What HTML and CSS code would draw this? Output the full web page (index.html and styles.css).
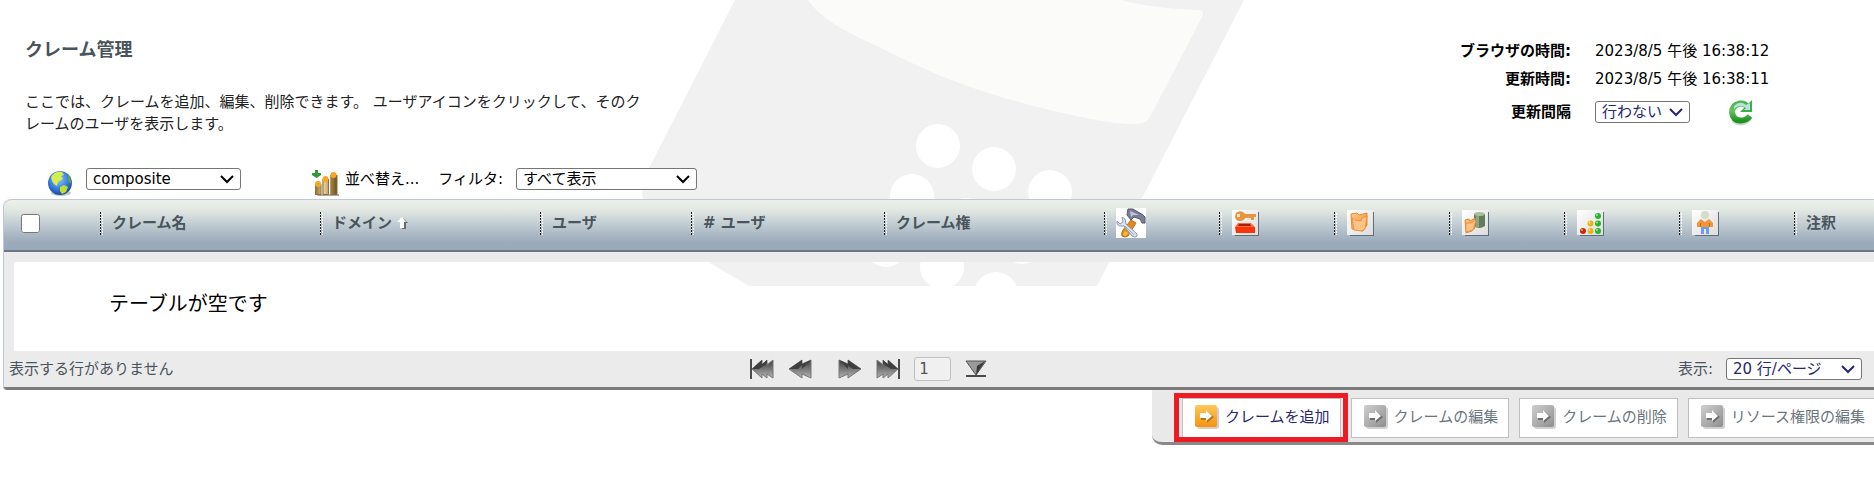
FILE: index.html
```html
<!DOCTYPE html>
<html lang="ja">
<head>
  <meta charset="UTF-8">
  <meta name="viewport" content="width=device-width, initial-scale=1.0">
  <title>クレーム管理</title>
  <link rel="stylesheet" href="styles.css">
</head>
<body>
  <!-- 共通のグラデーション -->
  <svg class="defs" width="0" height="0" aria-hidden="true">
    <defs>
      <linearGradient id="tile" x1="0" y1="0" x2="1" y2="1"><stop offset="0" stop-color="#ffffff"/><stop offset="1" stop-color="#dcdcdc"/></linearGradient>
      <linearGradient id="orange" x1="0" y1="0" x2="1" y2="1"><stop offset="0" stop-color="#ffc98c"/><stop offset="1" stop-color="#f08a2c"/></linearGradient>
      <linearGradient id="gold" x1="0" y1="0" x2="1" y2="0"><stop offset="0" stop-color="#8f6b2c"/><stop offset="0.4" stop-color="#ecd29a"/><stop offset="1" stop-color="#6d4a14"/></linearGradient>
      <linearGradient id="metal" x1="0" y1="0" x2="0" y2="1"><stop offset="0" stop-color="#3c3c3c"/><stop offset="1" stop-color="#b4b4b4"/></linearGradient>
      <linearGradient id="green" x1="0" y1="0" x2="0" y2="1"><stop offset="0" stop-color="#4db848"/><stop offset="0.45" stop-color="#6cc05c"/><stop offset="1" stop-color="#1d9420"/></linearGradient>
      <linearGradient id="arrowOn" x1="0" y1="0" x2="0" y2="1"><stop offset="0" stop-color="#ffc857"/><stop offset="1" stop-color="#f7920f"/></linearGradient>
      <linearGradient id="arrowOff" x1="0" y1="0" x2="1" y2="1"><stop offset="0" stop-color="#cfcfcf"/><stop offset="1" stop-color="#8e8e8e"/></linearGradient>
      <radialGradient id="sea" cx="0.45" cy="0.35" r="0.65"><stop offset="0" stop-color="#8fc4ff"/><stop offset="0.6" stop-color="#3b7ddd"/><stop offset="1" stop-color="#164a9e"/></radialGradient>
    </defs>
  </svg>

  <svg class="watermark" width="620" height="286" viewBox="636 0 620 286" aria-hidden="true">
    <path fill="#f1f1f1" d="M735 0L648 170Q640 186 643 200Q660 232 710 263L749 286H1097L1141 200L1244 0Z"/>
    <path fill="#fbfbfa" d="M808 0C822 20 850 34 877 46C905 60 930 72 957 82C990 95 1040 109 1091 119Q1115 124 1136 124Q1146 124 1150 117L1203 15Q1204 10 1197 10Q1150 8 1122 0Z"/>
    <g fill="#ffffff">
      <circle cx="938" cy="146" r="22"/>
      <circle cx="994" cy="169" r="22"/>
      <circle cx="1050" cy="192" r="22"/>
      <circle cx="912" cy="196" r="22"/>
      <circle cx="966" cy="220" r="22"/>
      <circle cx="1022" cy="242" r="22"/>
      <circle cx="886" cy="245" r="22"/>
      <circle cx="942" cy="267" r="22"/>
      <circle cx="996" cy="294" r="22"/>
    </g>
  </svg>

  <header class="page-header">
    <div class="intro">
      <h1>クレーム管理</h1>
      <p>ここでは、クレームを追加、編集、削除できます。 ユーザアイコンをクリックして、そのクレームのユーザを表示します。</p>
    </div>
    <div class="clock">
      <span class="clock-label">ブラウザの時間:</span>
      <span>2023/8/5 午後 16:38:12</span>
      <span class="clock-label">更新時間:</span>
      <span>2023/8/5 午後 16:38:11</span>
      <label class="clock-label" for="refreshRate">更新間隔</label>
      <div class="refresh">
        <select id="refreshRate" class="select select-blue select-rate">
          <option>行わない</option>
        </select>
        <button type="button" class="icon-button" aria-label="更新">
          <svg width="26" height="27" viewBox="0 0 26 27">
            <path fill="none" stroke="#d0d6d0" stroke-width="3" d="M5 22Q13 29 23 20"/>
            <path fill="none" stroke="url(#green)" stroke-width="6" d="M19 7Q16 4 12 4.500Q4 6 4 13.500Q5 21 12 21.500Q18 22 22 17"/>
            <path fill="#3fae45" d="M24 1V13H12Z"/>
            <path fill="#b5e4e6" d="M6 7Q12 1 18 6L22 4V11H16L18 9Q12 4 6 10Z"/>
          </svg>
        </button>
      </div>
    </div>
  </header>

  <div class="toolbar">
    <svg class="toolbar-icon" width="26" height="27" viewBox="0 0 26 27" aria-hidden="true">
      <ellipse cx="14" cy="23" rx="10" ry="3" fill="#c4c4c4"/>
      <circle cx="13" cy="13" r="12" fill="url(#sea)"/>
      <path fill="#d5ee4c" d="M4 7Q8 1 15 2L17 5L14 6L16 9L11 12L10 16Q6 14 5 11Z"/>
      <path fill="#c0df28" d="M13 17L17 15L21 17L19 22L15 24L13 21Z"/>
      <path fill="#5fa93a" d="M21 5Q25 9 24 14L21 11Z"/>
    </svg>
    <select class="select select-domain" aria-label="ドメイン">
      <option>composite</option>
    </select>
    <button type="button" class="sort-button">
      <svg class="toolbar-icon" width="28" height="27" viewBox="0 0 28 27" aria-hidden="true">
        <path fill="#a9a9a9" d="M4 24H27V26H6Z"/>
        <path fill="url(#gold)" d="M3 14H9V25H3ZM10.500 9H16.500V25H10.500ZM18.500 5H25V25H18.500Z"/>
        <path fill="none" stroke="#8d6f3a" d="M3.500 14V24.500H9V14M11 9V24.500H16.500V9M19 5V24.500H25V5"/>
        <circle cx="6" cy="14" r="3" fill="#f6a623"/>
        <circle cx="13.500" cy="9" r="3" fill="#f6a623"/>
        <circle cx="21.500" cy="5" r="3" fill="#f6a623"/>
        <path fill="#2f9a36" d="M3 0H6V3H9V5L4.500 8L0 5V3H3Z"/>
      </svg>
      並べ替え...
    </button>
    <label for="filter">フィルタ:</label>
    <select id="filter" class="select select-filter">
      <option>すべて表示</option>
    </select>
  </div>

  <main class="panel">
    <table class="claims">
      <colgroup>
        <col class="col-check">
        <col class="col-wide">
        <col class="col-wide">
        <col class="col-user">
        <col class="col-count">
        <col class="col-wide">
        <col class="col-icon">
        <col class="col-icon">
        <col class="col-icon">
        <col class="col-icon">
        <col class="col-icon">
        <col class="col-icon">
        <col>
      </colgroup>
      <thead>
        <tr>
          <th><input type="checkbox" class="check-all" aria-label="すべて選択"></th>
          <th><div class="head">クレーム名</div></th>
          <th>
            <div class="head">ドメイン
              <svg width="11" height="12" viewBox="0 0 11 12" aria-hidden="true">
                <path fill="#5f6a72" d="M6 1L11 6H9V12H5Z"/>
                <path fill="#ffffff" d="M5 0L9 5H7V11H3V5H0Z"/>
              </svg>
            </div>
          </th>
          <th><div class="head">ユーザ</div></th>
          <th><div class="head"># ユーザ</div></th>
          <th><div class="head">クレーム権</div></th>
          <th aria-label="ツール">
            <div class="head">
              <svg width="30" height="30" viewBox="0 0 30 30">
                <path fill="#ffffff" d="M0 0H30V30H0Z"/>
                <path fill="#e9871b" stroke="#c06f1c" d="M15 12L20 15L12 28Q9 30 6 28Q5 25 7 22Z"/>
                <path fill="#f9c23c" d="M9 23L12 25L10 28L7 27Z"/>
                <path fill="#7c7e96" stroke="#55576e" d="M12 1L17 1L27 7L29 9V15H26L24 11L18 9L15 12L11 7Z"/>
                <path fill="#c4c6da" d="M14 3L23 7L17 7L15 9Z"/>
                <path fill="#d8e2f0" stroke="#8f99bb" d="M1 13L4 16L7 14L6 9L9 11L10 16L21 26Q22 29 19 29L16 28L8 18Q3 19 1 16Z"/>
                <path fill="none" stroke="#8dbcb8" d="M9 18L18 27"/>
              </svg>
            </div>
          </th>
          <th aria-label="権限">
            <div class="head">
              <svg width="29" height="28" viewBox="0 0 29 28">
                <path fill="#5f6d7d" d="M4 3H28V27H4Z"/>
                <path fill="url(#tile)" d="M1 1H27V26H1Z"/>
                <path fill="#e89540" d="M5 4Q8 1 12 3L14 5H25V8H23V11H20V9H14Q13 12 9 12Q4 12 4 7Z"/>
                <path fill="#fbe3c5" d="M6 5H9V8H6Z"/>
                <path fill="#ff6a45" d="M7 14H20L24 18H4Z"/>
                <path fill="#a52206" d="M8 15H19L20 17H7Z"/>
                <path fill="#f9360a" d="M4 18H24V24H5Z"/>
              </svg>
            </div>
          </th>
          <th aria-label="フォルダ">
            <div class="head">
              <svg width="29" height="28" viewBox="0 0 29 28">
                <path fill="#5f6d7d" d="M4 3H28V27H4Z"/>
                <path fill="url(#tile)" d="M1 1H27V26H1Z"/>
                <path fill="url(#orange)" stroke="#e28a35" d="M5 5L11 4L13 6L21 4V16L17 22L6 20Z"/>
                <path fill="#ffc387" stroke="#e9943f" d="M6 9L9 11L15 12L16 9L21 7L19 20L16 22L8 21Z"/>
              </svg>
            </div>
          </th>
          <th aria-label="データソース">
            <div class="head">
              <svg width="29" height="28" viewBox="0 0 29 28">
                <path fill="#5f6d7d" d="M4 3H28V27H4Z"/>
                <path fill="url(#tile)" d="M1 1H27V26H1Z"/>
                <path fill="#627d5b" d="M13 5V17Q18 21 24 17V5Z"/>
                <path fill="#8ca584" d="M15 7H18V18H15Z"/>
                <ellipse cx="18.500" cy="5" rx="5.500" ry="2" fill="#a7bf9c"/>
                <path fill="url(#orange)" stroke="#e28a35" d="M4 11L8 10L9 12L14 9V19L11 22L5 24Z"/>
                <path fill="#ffc387" stroke="#e9943f" d="M5 14L10 14L15 11L12 21L5 23Z"/>
              </svg>
            </div>
          </th>
          <th aria-label="状態">
            <div class="head">
              <svg width="29" height="28" viewBox="0 0 29 28">
                <path fill="#5f6d7d" d="M4 3H28V27H4Z"/>
                <path fill="url(#tile)" d="M1 1H27V26H1Z"/>
                <g fill="#28b428"><circle cx="22" cy="7" r="3"/><circle cx="22" cy="14.500" r="3"/><circle cx="22" cy="22" r="3"/></g>
                <g fill="#edb111"><circle cx="14.500" cy="14.500" r="3"/><circle cx="14.500" cy="22" r="3"/></g>
                <circle cx="7" cy="22" r="3" fill="#c42b08"/>
                <g fill="#ffffff" fill-opacity="0.6"><circle cx="21" cy="6" r="1"/><circle cx="21" cy="13.500" r="1"/><circle cx="21" cy="21" r="1"/><circle cx="13.500" cy="13.500" r="1"/><circle cx="13.500" cy="21" r="1"/><circle cx="6" cy="21" r="1"/></g>
              </svg>
            </div>
          </th>
          <th aria-label="担当">
            <div class="head">
              <svg width="29" height="28" viewBox="0 0 29 28">
                <path fill="#5f6d7d" d="M4 3H28V27H4Z"/>
                <path fill="url(#tile)" d="M1 1H27V26H1Z"/>
                <circle cx="14" cy="6" r="4" fill="#d5dccb"/>
                <path fill="#6d9cec" d="M10 17H18V25H15V20H13V25H10Z"/>
                <path fill="#f29438" d="M10 10L14 13L18 10L22 14V18H6V14Z"/>
                <path fill="#c96b1b" d="M9 14H10V18H9ZM18 14H19V18H18Z"/>
              </svg>
            </div>
          </th>
          <th><div class="head">注釈</div></th>
        </tr>
      </thead>
      <tbody>
        <tr>
          <td class="empty" colspan="13">テーブルが空です</td>
        </tr>
      </tbody>
    </table>

    <div class="panel-footer">
      <span>表示する行がありません</span>
      <div class="pager">
        <button type="button" class="icon-button" aria-label="最初のページ">
          <svg width="24" height="22" viewBox="0 0 24 22"><path fill="#4a4a4a" d="M0 1H2V21H0Z"/><path fill="url(#metal)" stroke="#777777" d="M12 2L2 11L12 20V16L17 20V16L23 20V2L17 7V2L12 7Z"/><path fill="#3f3f3f" d="M12 2L2 11H9L23 2L17 6V2L12 6Z"/></svg>
        </button>
        <button type="button" class="icon-button" aria-label="前のページ">
          <svg width="24" height="22" viewBox="0 0 24 22"><path fill="url(#metal)" stroke="#777777" d="M14 2L1 11L14 20V16L23 20V2L14 6Z"/><path fill="#3f3f3f" d="M14 2L1 11H10L14 7V11L23 2L14 6Z"/></svg>
        </button>
        <button type="button" class="icon-button next" aria-label="次のページ">
          <svg width="24" height="22" viewBox="0 0 24 22"><path fill="url(#metal)" stroke="#777777" d="M1 2V20L10 16V20L23 11L10 2V6Z"/><path fill="#3f3f3f" d="M1 2L10 11V8L15 11H23L10 2V6Z"/></svg>
        </button>
        <button type="button" class="icon-button" aria-label="最後のページ">
          <svg width="24" height="22" viewBox="0 0 24 22"><path fill="url(#metal)" stroke="#777777" d="M1 2V20L7 16V20L12 16V20L22 11L12 2V7L7 2V7Z"/><path fill="#3f3f3f" d="M1 2L15 11H22L12 2V6L7 2V6Z"/><path fill="#4a4a4a" d="M22 1H24V21H22Z"/></svg>
        </button>
        <input type="text" class="page-input" value="1" aria-label="ページ" disabled>
        <button type="button" class="icon-button" aria-label="ページへ移動">
          <svg width="22" height="18" viewBox="0 0 22 18"><path fill="#9a9a9a" stroke="#555555" d="M1 1H21L11 15Z"/><path fill="#3a3a3a" d="M20 1L11 15L12 6Z"/><path fill="#4a4a4a" d="M1 15H21V17H1Z"/></svg>
        </button>
      </div>
      <div class="page-size">
        <label for="pageSize">表示:</label>
        <select id="pageSize" class="select select-blue select-size">
          <option>20 行/ページ</option>
        </select>
      </div>
    </div>
  </main>

  <div class="actions">
    <button type="button" class="action action-on">
      <svg width="24" height="24" viewBox="0 0 24 24" aria-hidden="true"><rect x="2" y="2" width="22" height="22" rx="3" fill="#d0d0d0"/><rect width="22" height="22" rx="2" fill="url(#arrowOn)"/><path fill="#b87520" d="M6 9H12V6L19 12L12 18V15H6Z"/><path fill="#ffffff" d="M5 8H11V5L17 11L11 16V13H5Z"/></svg>
      クレームを追加
    </button>
    <button type="button" class="action">
      <svg width="24" height="24" viewBox="0 0 24 24" aria-hidden="true"><rect x="2" y="2" width="22" height="22" rx="3" fill="#d0d0d0"/><rect width="22" height="22" rx="2" fill="url(#arrowOff)"/><path fill="#6f6f6f" d="M6 9H12V6L19 12L12 18V15H6Z"/><path fill="#ffffff" d="M5 8H11V5L17 11L11 16V13H5Z"/></svg>
      クレームの編集
    </button>
    <button type="button" class="action">
      <svg width="24" height="24" viewBox="0 0 24 24" aria-hidden="true"><rect x="2" y="2" width="22" height="22" rx="3" fill="#d0d0d0"/><rect width="22" height="22" rx="2" fill="url(#arrowOff)"/><path fill="#6f6f6f" d="M6 9H12V6L19 12L12 18V15H6Z"/><path fill="#ffffff" d="M5 8H11V5L17 11L11 16V13H5Z"/></svg>
      クレームの削除
    </button>
    <button type="button" class="action action-last">
      <svg width="24" height="24" viewBox="0 0 24 24" aria-hidden="true"><rect x="2" y="2" width="22" height="22" rx="3" fill="#d0d0d0"/><rect width="22" height="22" rx="2" fill="url(#arrowOff)"/><path fill="#6f6f6f" d="M6 9H12V6L19 12L12 18V15H6Z"/><path fill="#ffffff" d="M5 8H11V5L17 11L11 16V13H5Z"/></svg>
      リソース権限の編集
    </button>
  </div>
</body>
</html>
```
FILE: styles.css
```css
* {
  box-sizing: border-box;
}

body {
  margin: 0;
  font-family: "DejaVu Sans", "Noto Sans CJK JP", sans-serif;
  font-size: 15px;
  line-height: 22px;
  color: #000;
  background-color: #fff;
}

button,
input,
select {
  font: inherit;
}

svg {
  display: block;
  flex: none;
}

.defs {
  position: absolute;
}

/* 背景の透かし */
.watermark {
  position: absolute;
  top: 0;
  left: 50%;
  margin-left: -301px;
  z-index: -1;
}

.page-header {
  display: flex;
  justify-content: space-between;
  padding: 37px 96px 24px 25px;
}

.intro {
  max-width: 628px;
}

h1 {
  margin: 0 0 28px;
  font-size: 18px;
  line-height: 26px;
  color: #4a545c;
}

p {
  margin: 0;
  color: #222;
}

.clock {
  display: grid;
  grid-template-columns: auto 183px;
  grid-template-rows: 28px 28px 38px;
  column-gap: 24px;
  align-items: center;
}

.clock-label {
  font-weight: bold;
  text-align: right;
}

.refresh {
  display: flex;
  align-items: center;
  gap: 38px;
}

.icon-button {
  padding: 0;
  border: none;
  background: none;
  cursor: pointer;
}

.select {
  height: 22px;
  padding: 0 24px 0 6px;
  border: 1px solid #767676;
  border-radius: 3px;
  line-height: 20px;
  color: #000;
  appearance: none;
  background: #fff url("data:image/svg+xml,%3Csvg xmlns='http://www.w3.org/2000/svg' width='14' height='9'%3E%3Cpath d='M1 1L7 7L13 1' fill='none' stroke='%23000' stroke-width='2'/%3E%3C/svg%3E") no-repeat right 6px center;
}

.select-blue {
  color: #262672;
  background-image: url("data:image/svg+xml,%3Csvg xmlns='http://www.w3.org/2000/svg' width='14' height='9'%3E%3Cpath d='M1 1L7 7L13 1' fill='none' stroke='%23262672' stroke-width='2'/%3E%3C/svg%3E");
}

.select-rate {
  width: 95px;
}

.select-domain {
  width: 155px;
  margin-right: 58px;
}

.select-filter {
  width: 181px;
}

.select-size {
  width: 136px;
}

.toolbar {
  display: flex;
  align-items: center;
  gap: 13px;
  height: 40px;
  padding-left: 47px;
}

.toolbar-icon {
  margin-top: 8px;
}

.sort-button {
  display: flex;
  align-items: center;
  gap: 5px;
  padding: 0;
  margin-right: 6px;
  border: none;
  background: none;
  color: #000;
  cursor: pointer;
}

.panel {
  margin-left: 3px;
  border-left: 1px solid #bccad6;
  border-radius: 8px 0 0 3px;
}

.claims {
  width: 100%;
  table-layout: fixed;
  border-collapse: separate;
  border-spacing: 0;
}

.col-check {
  width: 96px;
}

.col-wide {
  width: 220px;
}

.col-user {
  width: 151px;
}

.col-count {
  width: 193px;
}

.col-icon {
  width: 115px;
}

th {
  height: 53px;
  padding: 0 0 4px;
  border-top: 1px solid #bccad6;
  border-bottom: 2px solid #6b7885;
  text-align: left;
  color: #4a545c;
  background: linear-gradient(#eef0ea 0%, #e3e8e3 18%, #c5d0d5 42%, #9dacbc 78%, #98a8b9 100%);
  background-size: 100% 53px;
}

th:first-child {
  padding-left: 17px;
  border-top-left-radius: 8px;
}

.head {
  display: flex;
  align-items: center;
  gap: 5px;
  height: 30px;
  /* 列の区切り（点線） */
  background:
    repeating-linear-gradient(#222 0 2px, #fff 2px 3px) 0 4px / 1px 23px no-repeat,
    repeating-linear-gradient(transparent 0 1px, #fff 1px 3px) 2px 4px / 1px 23px no-repeat;
  padding-left: 12px;
}

.check-all {
  display: block;
  width: 19px;
  height: 19px;
  margin: 0;
}

.empty {
  height: 99px;
  padding: 0 0 6px 95px;
  border-top: 10px solid #ebebeb;
  border-left: 10px solid #ebebeb;
  font-size: 20px;
}

.panel-footer {
  display: grid;
  grid-template-columns: 40% auto 1fr;
  align-items: center;
  height: 39px;
  padding: 0 12px 0 5px;
  border-bottom: 3px solid #7b7b7b;
  border-bottom-left-radius: 3px;
  color: #4a545c;
  background-color: #ebebeb;
}

.pager {
  display: flex;
  align-items: center;
  gap: 14px;
}

.next {
  margin-left: 12px;
}

.page-input {
  width: 37px;
  height: 24px;
  padding: 0 4px;
  border: 1px solid #c0c0c0;
  border-radius: 3px;
  color: #545454;
  background-color: #f0f0f0;
}

.page-size {
  display: flex;
  align-items: center;
  justify-content: flex-end;
  gap: 13px;
}

.actions {
  display: flex;
  gap: 10px;
  width: fit-content;
  margin-left: auto;
  padding: 8px 0 4px 30px;
  border-bottom: 3px solid #8a8a8a;
  border-bottom-left-radius: 10px;
  background-color: #e9e9e9;
}

.action {
  display: flex;
  align-items: center;
  gap: 6px;
  height: 40px;
  padding: 0 10px 2px 12px;
  border: 1px solid #bfbfbf;
  white-space: nowrap;
  color: #6b757d;
  background-color: #fff;
}

.action-on {
  position: relative;
  color: #262672;
}

/* 操作対象の赤枠 */
.action-on::after {
  content: "";
  position: absolute;
  inset: -6px -8px -5px -9px;
  border: 5px solid #ed1c24;
}

.action-last {
  padding-right: 9px;
  border-right: none;
}
```
